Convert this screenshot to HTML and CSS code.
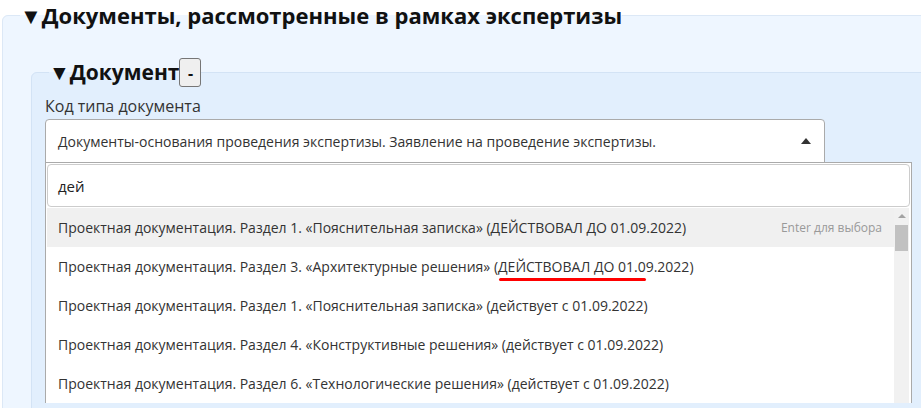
FILE: index.html
```html
<!DOCTYPE html>
<html lang="ru">
<head>
  <meta charset="UTF-8" />
  <title>Документы, рассмотренные в рамках экспертизы</title>
  <link rel="stylesheet" href="styles.css">
</head>
<body>
  <!-- Outer section -->
  <fieldset class="section">
    <legend class="section-title">▼Документы, рассмотренные в рамках экспертизы</legend>

    <!-- Document block -->
    <fieldset class="doc">
      <legend class="doc-title">▼Документ<button class="btn-remove" type="button">-</button></legend>
      <label class="field-label">Код типа документа</label>

      <div class="combo">
        <div class="combo-selected">
          <span>Документы-основания проведения экспертизы. Заявление на проведение экспертизы.</span>
          <span class="combo-arrow"></span>
        </div>

        <div class="combo-dropdown">
          <div class="combo-search">дей</div>
          <div class="combo-results">
            <ul class="combo-list">
              <li class="combo-option highlighted">
                <span>Проектная документация. Раздел 1. «Пояснительная записка» (ДЕЙСТВОВАЛ ДО 01.09.2022)</span>
                <span class="hint">Enter для выбора</span>
              </li>
              <li class="combo-option">
                <span>Проектная документация. Раздел 3. «Архитектурные решения» (<span class="marked">ДЕЙСТВОВАЛ ДО 01.09.</span>2022)</span>
              </li>
              <li class="combo-option">
                <span>Проектная документация. Раздел 1. «Пояснительная записка» (действует с 01.09.2022)</span>
              </li>
              <li class="combo-option">
                <span>Проектная документация. Раздел 4. «Конструктивные решения» (действует с 01.09.2022)</span>
              </li>
              <li class="combo-option">
                <span>Проектная документация. Раздел 6. «Технологические решения» (действует с 01.09.2022)</span>
              </li>
            </ul>
            <div class="scrollbar">
              <span class="scroll-up"></span>
              <span class="scroll-thumb"></span>
            </div>
          </div>
        </div>
      </div>
    </fieldset>
  </fieldset>
</body>
</html>
```

FILE: styles.css
```css
/* Global */
* { box-sizing: border-box; }
html, body { overflow: hidden; }
body {
  margin: 0;
  height: 408px;
  background: #ffffff;
  font-family: 'Open Sans', 'Noto Sans', sans-serif;
  color: #222;
}

/* Outer section */
.section {
  margin: 0 -40px 0 2px;
  padding: 11px 0 0 17px;
  border: 1px solid #dce8f6;
  border-radius: 6px;
  background: #eef6ff;
  min-height: 420px;
}
.section-title {
  padding: 0;
  font-size: 22px;
  font-weight: 700;
  line-height: 31px;
  color: #111;
}

/* Document block */
.doc {
  margin: 16px 0 0 11px;
  padding: 8px 0 0 13px;
  border: 1px solid #d3e3f5;
  border-radius: 6px;
  background: #e2effd;
  min-height: 360px;
}
.doc-title {
  margin-left: 4px;
  padding: 0;
  font-size: 21px;
  font-weight: 700;
  line-height: 29px;
  color: #111;
  display: flex;
  align-items: center;
}
.btn-remove {
  width: 22px;
  height: 29px;
  padding: 0;
  border: 1px solid #767676;
  border-radius: 3px;
  background: #efefef;
  font-family: inherit;
  font-size: 16px;
  font-weight: 700;
  color: #111;
}
.field-label {
  display: block;
  font-size: 16px;
  line-height: 22px;
  color: #333;
  margin-bottom: 2px;
}

/* Combo (select) */
.combo {
  width: 867px;
}
.combo-selected {
  width: 780px;
  height: 44px;
  padding: 0 12px;
  display: flex;
  align-items: center;
  justify-content: space-between;
  background: #fff;
  border: 1px solid #aaa;
  border-radius: 4px 4px 0 0;
  font-size: 14px;
  color: #333;
}
.combo-arrow {
  width: 0;
  height: 0;
  margin-right: 1px;
  border-left: 5px solid transparent;
  border-right: 5px solid transparent;
  border-bottom: 6px solid #333;
}
.combo-dropdown {
  margin-top: -1px;
  background: #fff;
  border: 1px solid #aaa;
  border-bottom: 0;
  padding: 1px 1px 0;
}
.combo-search {
  height: 43px;
  margin-bottom: 1px;
  padding: 0 10px;
  display: flex;
  align-items: center;
  border: 1px solid #ccc;
  border-radius: 4px;
  font-size: 15px;
  color: #222;
}
.combo-results {
  display: flex;
}
.combo-list {
  flex: 1;
  margin: 0;
  padding: 0;
  list-style: none;
}
.combo-option {
  height: 39px;
  padding: 0 12px 0 11px;
  display: flex;
  align-items: center;
  justify-content: space-between;
  font-size: 14px;
  color: #333;
}
.combo-option.highlighted {
  background: #f0f0f0;
}
.hint {
  font-size: 12px;
  color: #999;
}
.marked {
  position: relative;
}
.marked::after {
  content: "";
  position: absolute;
  left: 1px;
  width: 147px;
  bottom: -5px;
  height: 3px;
  border-radius: 2px;
  background: #ff0000;
}

/* Scrollbar */
.scrollbar {
  width: 15px;
  margin-right: 1px;
  background: #f1f1f1;
  display: flex;
  flex-direction: column;
  align-items: center;
}
.scroll-up {
  margin-top: 6px;
  width: 0;
  height: 0;
  border-left: 4px solid transparent;
  border-right: 4px solid transparent;
  border-bottom: 4px solid #a3a3a3;
}
.scroll-thumb {
  margin-top: 7px;
  width: 13px;
  height: 26px;
  background: #c1c1c1;
}
```
